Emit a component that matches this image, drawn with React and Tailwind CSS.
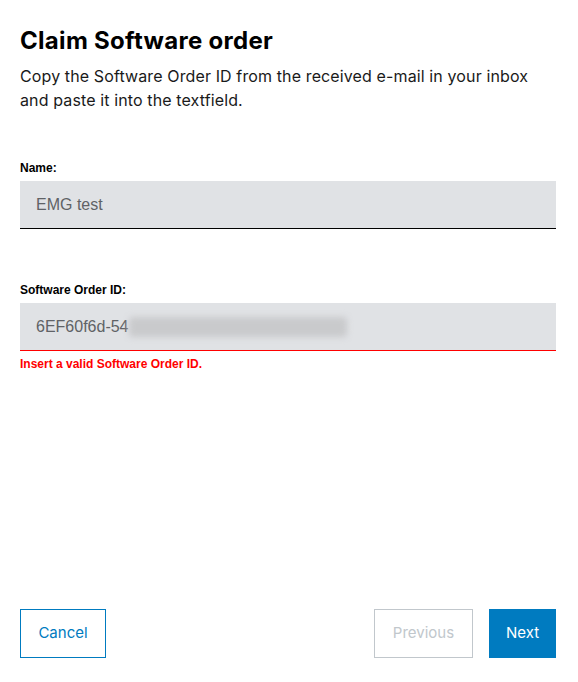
const sans = { fontFamily: "Inter, 'Liberation Sans', sans-serif" };
const arial = { fontFamily: "'Liberation Sans', Arial, sans-serif" };

export default function App() {
  return (
    <div className="flex min-h-screen flex-col bg-white px-5 pb-[24px] pt-[26px] text-black" style={sans}>
      <div className="w-[536px]">
        <h1 className="text-[24px] font-bold leading-[30px] tracking-[0.3px]">Claim Software order</h1>
        <p className="mt-[8px] text-[16px] leading-[24px] tracking-[0.12px] text-[#1a1a1a]">
          Copy the Software Order ID from the received e-mail in your inbox and paste it into the textfield.
        </p>

        <div className="mt-[49px]">
          <label className="block text-[12px] font-bold leading-[14px]" style={arial}>
            Name:
          </label>
          <div
            className="mt-[6px] flex h-[48px] items-center border-b border-black bg-[#e0e2e5] px-4 text-[16px] text-[#5f6266]"
            style={arial}
          >
            EMG test
          </div>
        </div>

        <div className="mt-[54px]">
          <label className="block text-[12px] font-bold leading-[14px]" style={arial}>
            Software Order ID:
          </label>
          <div
            className="mt-[6px] flex h-[48px] items-center border-b border-[#ff0000] bg-[#e0e2e5] px-4 text-[16px] text-[#5f6266]"
            style={arial}
          >
            <span>6EF60f6d-54</span>
            <span className="relative h-[20px] w-[218px]">
              <span className="absolute inset-0 rounded-sm bg-[#c9cacc] blur-[3px]" />
            </span>
          </div>
          <p className="mt-[6px] text-[12px] font-bold leading-[14px] text-[#ff0000]" style={arial}>
            Insert a valid Software Order ID.
          </p>
        </div>
      </div>

      <div className="flex-1" />

      <div className="flex w-[536px] items-center">
        <button className="h-[49px] w-[86px] border border-[#007bc0] text-[15px] text-[#007bc0]">Cancel</button>
        <div className="flex-1" />
        <button className="h-[49px] w-[99px] border border-[#c1c7cc] text-[15px] text-[#c1c7cc]">Previous</button>
        <button className="ml-[16px] h-[49px] w-[67px] bg-[#007bc0] text-[15px] text-white">Next</button>
      </div>
    </div>
  );
}
